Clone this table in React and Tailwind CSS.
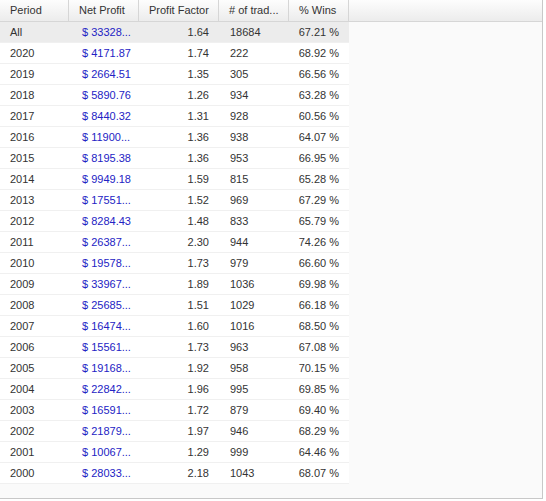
const rows = [
  ['All', '$ 33328...', '1.64', '18684', '67.21 %'],
  ['2020', '$ 4171.87', '1.74', '222', '68.92 %'],
  ['2019', '$ 2664.51', '1.35', '305', '66.56 %'],
  ['2018', '$ 5890.76', '1.26', '934', '63.28 %'],
  ['2017', '$ 8440.32', '1.31', '928', '60.56 %'],
  ['2016', '$ 11900...', '1.36', '938', '64.07 %'],
  ['2015', '$ 8195.38', '1.36', '953', '66.95 %'],
  ['2014', '$ 9949.18', '1.59', '815', '65.28 %'],
  ['2013', '$ 17551...', '1.52', '969', '67.29 %'],
  ['2012', '$ 8284.43', '1.48', '833', '65.79 %'],
  ['2011', '$ 26387...', '2.30', '944', '74.26 %'],
  ['2010', '$ 19578...', '1.73', '979', '66.60 %'],
  ['2009', '$ 33967...', '1.89', '1036', '69.98 %'],
  ['2008', '$ 25685...', '1.51', '1029', '66.18 %'],
  ['2007', '$ 16474...', '1.60', '1016', '68.50 %'],
  ['2006', '$ 15561...', '1.73', '963', '67.08 %'],
  ['2005', '$ 19168...', '1.92', '958', '70.15 %'],
  ['2004', '$ 22842...', '1.96', '995', '69.85 %'],
  ['2003', '$ 16591...', '1.72', '879', '69.40 %'],
  ['2002', '$ 21879...', '1.97', '946', '68.29 %'],
  ['2001', '$ 10067...', '1.29', '999', '64.46 %'],
  ['2000', '$ 28033...', '2.18', '1043', '68.07 %'],
]

export default function App() {
  return (
    <div className="w-[546px] h-[501px] bg-white" style={{ fontFamily: '"Liberation Sans", Arial, sans-serif' }}>
      <div className="w-[543px] h-[499px] bg-[#fafafa] border-r border-b border-[#c8c8c8] text-[11px] text-[#333]">
        {/* header */}
        <div className="flex h-[22px] border-b border-[#d6d6d6] bg-gradient-to-b from-[#fdfdfd] to-[#ececec]">
          <div className="w-[69px] pl-[10px] flex items-center border-r border-[#d6d6d6]">Period</div>
          <div className="w-[70px] pl-[10px] flex items-center border-r border-[#d6d6d6]">Net Profit</div>
          <div className="w-[80px] pl-[10px] flex items-center border-r border-[#d6d6d6]">Profit Factor</div>
          <div className="w-[70px] pl-[10px] flex items-center border-r border-[#d6d6d6]">
            # of trad...
          </div>
          <div className="w-[60px] pl-[10px] flex items-center border-r border-[#d6d6d6]">% Wins</div>
          <div className="flex-1" />
        </div>
        {/* body */}
        <div className="w-[349px]">
          {rows.map((r, i) => (
            <div
              key={r[0]}
              className={`flex h-[21px] items-center border-b border-[#f0f0f0] ${i === 0 ? 'bg-[#ececec]' : 'bg-white'}`}
            >
              <div className="w-[69px] pl-[10px]">{r[0]}</div>
              <div className="w-[70px] pl-[13px] text-[#2323c4]">{r[1]}</div>
              <div className="w-[80px] pr-[10px] text-right">{r[2]}</div>
              <div className="w-[70px] pl-[11px]">{r[3]}</div>
              <div className="w-[60px] pr-[10px] text-right">{r[4]}</div>
            </div>
          ))}
        </div>
      </div>
    </div>
  )
}
